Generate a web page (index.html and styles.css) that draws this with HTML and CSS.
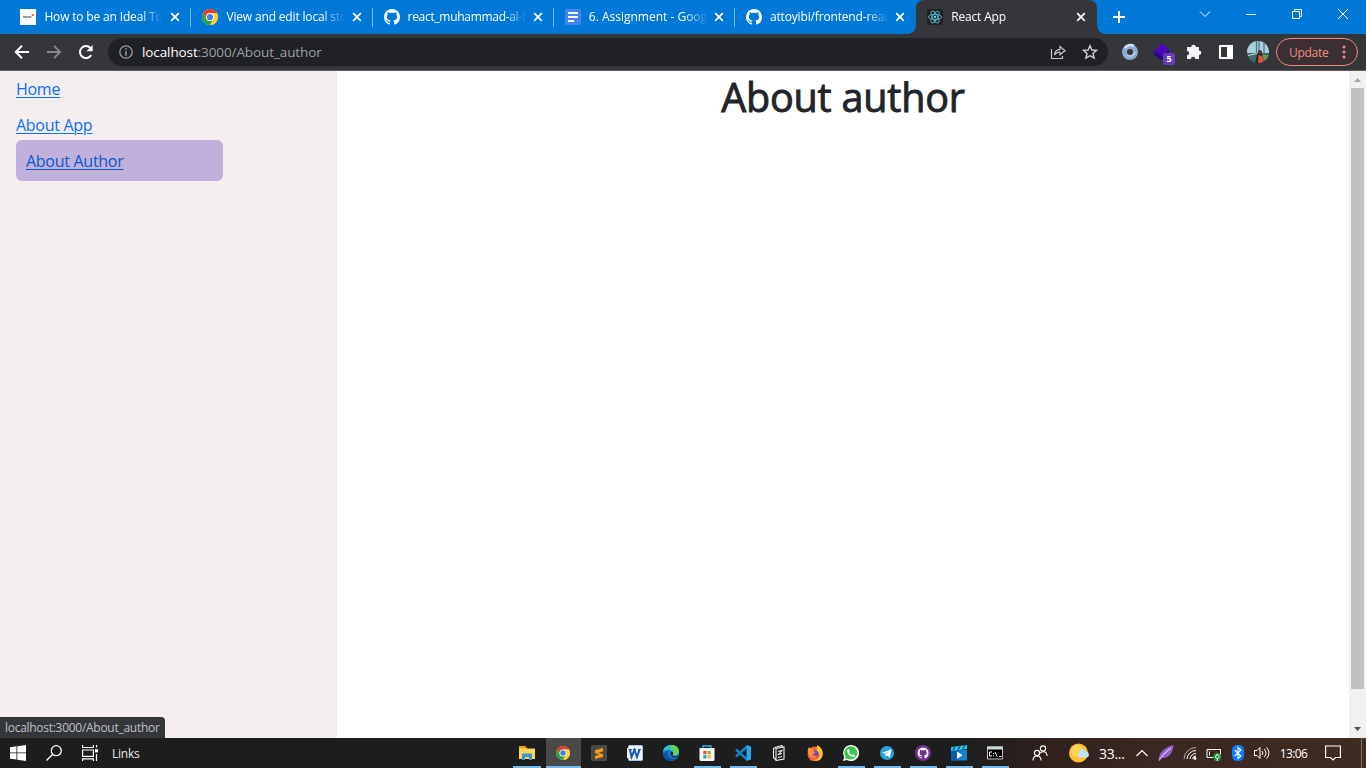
FILE: index.html
```html
<!DOCTYPE html>
<html lang="en">
<head>
<meta charset="utf-8">
<title>React App</title>
<link rel="stylesheet" href="styles.css">
</head>
<body>
<svg class="defs" width="0" height="0">
  <defs>
    <symbol id="close" viewBox="0 0 10 10"><path d="M1.2 1.2l7.6 7.6M8.8 1.2L1.2 8.8" fill="none" stroke="#fff" stroke-width="1.7"/></symbol>
    <symbol id="github" viewBox="0 0 16 16"><path fill="currentColor" d="M8 0C3.58 0 0 3.58 0 8c0 3.54 2.29 6.53 5.47 7.59.4.07.55-.17.55-.38 0-.19-.01-.82-.01-1.49-2.01.37-2.53-.49-2.69-.94-.09-.23-.48-.94-.82-1.13-.28-.15-.68-.52-.01-.53.63-.01 1.08.58 1.23.82.72 1.21 1.87.87 2.33.66.07-.52.28-.87.51-1.07-1.78-.2-3.64-.89-3.64-3.95 0-.87.31-1.59.82-2.15-.08-.2-.36-1.02.08-2.12 0 0 .67-.21 2.2.82.64-.18 1.32-.27 2-.27s1.36.09 2 .27c1.53-1.04 2.2-.82 2.2-.82.44 1.1.16 1.92.08 2.12.51.56.82 1.27.82 2.15 0 3.07-1.87 3.75-3.65 3.95.29.25.54.73.54 1.48 0 1.07-.01 1.93-.01 2.2 0 .21.15.46.55.38A8.01 8.01 0 0 0 16 8c0-4.42-3.58-8-8-8z"/></symbol>
    <symbol id="chrome" viewBox="0 0 16 16">
      <circle cx="8" cy="8" r="8" fill="#fc3"/>
      <path d="M1.07 4A8 8 0 0 1 14.93 4H8a4 4 0 0 0-3.46 6z" fill="#e33b2e"/>
      <path d="M1.07 4A8 8 0 0 0 8 16l3.46-6A4 4 0 0 1 4.54 10z" fill="#2ba24c"/>
      <path d="M14.93 4A8 8 0 0 1 8 16l3.46-6A4 4 0 0 0 8 4z" fill="#fdd03b"/>
      <circle cx="8" cy="8" r="4" fill="#fff"/><circle cx="8" cy="8" r="3.1" fill="#3f7ee8"/>
    </symbol>
  </defs>
</svg>

<header class="tabs">
  <div class="tab first">
    <svg class="favicon" viewBox="0 0 16 16"><path fill="#fff" d="M0 0h16v16H0z"/><path d="M3 8h8.500" stroke="#77788a" stroke-width="1.500"/><path d="M5 10.500h5" stroke="#e4e4e4" stroke-width=".7"/><circle cx="12.800" cy="6" r="1.200" fill="#f26a2a"/></svg>
    <span class="title">How to be an Ideal Top</span><svg class="x"><use href="#close"/></svg>
  </div>
  <div class="tab">
    <svg class="favicon"><use href="#chrome"/></svg>
    <span class="title">View and edit local sto</span><svg class="x"><use href="#close"/></svg>
  </div>
  <div class="tab">
    <svg class="favicon"><use href="#github"/></svg>
    <span class="title tight">react_muhammad-al-f</span><svg class="x"><use href="#close"/></svg>
  </div>
  <div class="tab">
    <svg class="favicon" viewBox="0 0 16 16"><rect width="16" height="16" rx="1.5" fill="#4384f4"/><path d="M3 4h10M3 8h10M3 12h6" stroke="#fff" stroke-width="2"/></svg>
    <span class="title loose">6. Assignment - Googl</span><svg class="x"><use href="#close"/></svg>
  </div>
  <div class="tab last">
    <svg class="favicon"><use href="#github"/></svg>
    <span class="title">attoyibi/frontend-reac</span><svg class="x"><use href="#close"/></svg>
  </div>
  <div class="tab active">
    <svg class="favicon" viewBox="0 0 16 16"><rect width="16" height="16" rx="2" fill="#222"/><g fill="none" stroke="#53b5cb" stroke-width=".9"><ellipse cx="8" cy="8" rx="6.6" ry="2.6"/><ellipse cx="8" cy="8" rx="6.6" ry="2.6" transform="rotate(60 8 8)"/><ellipse cx="8" cy="8" rx="6.6" ry="2.6" transform="rotate(120 8 8)"/></g><circle cx="8" cy="8" r="1.2" fill="#61dafb"/></svg>
    <span class="title">React App</span><svg class="x"><use href="#close"/></svg>
  </div>
  <svg class="plus" viewBox="0 0 12 12"><path d="M6 0v12M0 6h12" stroke="#fff" stroke-width="2"/></svg>
  <div class="window-controls">
    <svg width="12" height="12" viewBox="0 0 12 12"><path d="M1 3.5l5 5 5-5"/></svg>
    <svg width="12" height="12" viewBox="0 0 12 12"><path d="M1 6.5h10"/></svg>
    <svg width="12" height="12" viewBox="0 0 12 12"><path d="M1.5 3.5h7v7h-7zM3.5 3.5v-2h7v7h-2"/></svg>
    <svg width="12" height="12" viewBox="0 0 12 12"><path d="M1 1l10 10M11 1L1 11"/></svg>
  </div>
</header>

<nav class="toolbar">
  <div class="nav-icons">
    <svg viewBox="0 0 16 16"><path d="M15 8H2M8 1.8L1.8 8 8 14.2" fill="none" stroke="#fff" stroke-width="2"/></svg>
    <svg viewBox="0 0 16 16"><path d="M1 8h13M8 1.8L14.2 8 8 14.2" fill="none" stroke="#88898b" stroke-width="1.8"/></svg>
    <svg viewBox="0 0 16 16"><path d="M13.2 11A6 6 0 1 1 12.4 4" fill="none" stroke="#fff" stroke-width="2"/><path d="M14.6 1v6.2H8.4z" fill="#fff"/></svg>
  </div>
  <div class="address">
    <svg class="info" viewBox="0 0 14 14"><circle cx="7" cy="7" r="6.2" fill="none" stroke="#9aa0a6" stroke-width="1.3"/><path d="M7 3.2v1.6M7 6.2v4.6" stroke="#9aa0a6" stroke-width="1.5"/></svg>
    <span class="url"><b>localhost</b>:3000/About_author</span>
    <svg class="share" viewBox="0 0 16 16"><path d="M1.5 5v9.5h11V12M4.5 11c.4-4 2.4-5.6 5.5-5.7V2.5l5 4.2-5 4.1V8C7.6 8 6 8.800 4.500 11z" fill="none" stroke="#c4c7ca" stroke-width="1.2"/></svg>
    <svg class="star" viewBox="0 0 16 16"><path d="M8 1.700l1.900 4.300 4.700.4-3.600 3.100 1.100 4.600L8 11.700l-4.100 2.400L5 9.500 1.400 6.400l4.700-.4z" fill="none" stroke="#d0d3d6" stroke-width="1.4"/></svg>
  </div>
  <div class="extensions">
    <svg viewBox="0 0 18 18"><circle cx="9" cy="9" r="5.500" fill="none" stroke="#90acd0" stroke-width="5"/><path d="M4 5a6.500 6.500 0 0 1 9-2" fill="none" stroke="#d5e3f2" stroke-width="2.500"/><path d="M6 12a5 5 0 0 0 8-3" fill="none" stroke="#bed1e8" stroke-width="1.500"/></svg>
    <span class="purple"><svg viewBox="0 0 18 18"><path d="M1 8l5 2 10-3v4l-8 6-7-5z" fill="#2b0680"/><path d="M9 0l8 7-8 6-8-5z" fill="#4a09b8"/></svg><i>5</i></span>
    <svg viewBox="0 0 18 18"><path d="M2 4h4.200a2.300 2.300 0 1 1 4.600 0H14v3.500a2.300 2.300 0 1 1 0 4.600V16h-3.700a2.200 2.200 0 0 0-4.400 0H2v-3.700a2.200 2.200 0 0 0 0-4.400z" fill="#f1f3f4"/></svg>
    <svg viewBox="0 0 18 18"><path d="M2 2h14v14H2zM4 4v10h6V4z" fill="#fff" fill-rule="evenodd"/></svg>
    <svg class="avatar" viewBox="0 0 22 22"><clipPath id="round"><circle cx="11" cy="11" r="11"/></clipPath><g clip-path="url(#round)"><path fill="#a9d0e0" d="M0 0h22v12H0z"/><path fill="#3f6866" d="M0 12h22v10H0z"/><path fill="#79934c" d="M14 14h8v5h-8z"/><path d="M9.500 0v13M12 0v11M17 0v13" stroke="#53747e" stroke-width="1.300"/><path d="M1 14.500l9-2" stroke="#bed4d3" stroke-width="1.200"/><path fill="#1c2730" d="M10 14l2-5 3 1v3l2 9H8z"/><path fill="#e8552a" d="M11.500 14l3.500 1 2 7h-6z"/><circle cx="13" cy="11.500" r="1.500" fill="#573b35"/></g></svg>
  </div>
  <div class="update"><span>Update</span><svg viewBox="0 0 4 14"><circle cx="2" cy="2" r="1.500"/><circle cx="2" cy="7" r="1.500"/><circle cx="2" cy="12" r="1.500"/></svg></div>
</nav>

<main class="page">
  <aside class="sidebar">
    <a>Home</a>
    <a>About App</a>
    <a class="selected"><span>About Author</span></a>
    <div class="status">localhost:3000/About_author</div>
  </aside>
  <section class="content"><h1>About author</h1></section>
  <div class="scrollbar">
    <svg viewBox="0 0 17 17"><path d="M5 11l3.500-4 3.500 4z" fill="#a3a3a3"/></svg>
    <div class="thumb"></div>
    <svg viewBox="0 0 17 17"><path d="M5 6l3.500 4L12 6z" fill="#505050"/></svg>
  </div>
</main>

<footer class="taskbar">
  <div class="start">
    <svg viewBox="0 0 16 16"><path fill="#fff" d="M0 2.200l6.500-.9v6.200H0zM7.300 1.200L16 0v7.500H7.300zM0 8.300h6.500v6.300L0 13.700zM7.300 8.300H16V16l-8.700-1.200z"/></svg>
    <svg viewBox="0 0 16 16"><g fill="none" stroke="#fff" stroke-width="1.300"><circle cx="10.300" cy="5.700" r="5"/><path d="M6.700 9.300L.5 15.500"/></g></svg>
    <svg viewBox="0 0 16 16"><g fill="none" stroke="#fff" stroke-width="1.200"><path d="M.6 0v2.500h10.800V0M.6 5h10.800v6.300H.6zM.6 16v-2.200h10.800V16M14.500 0v2.500M14.500 9v7"/></g><path fill="#fff" d="M13 4.200h3v3.200h-3z"/></svg>
    <span>Links</span>
  </div>
  <div class="apps">
    <div class="app running"><svg viewBox="0 0 16 16"><path fill="#e6a700" d="M0 1h6l2 2v5H0z"/><path fill="#ffd45a" d="M0 3.500h16V14H0z"/><path fill="#3e91d5" d="M3 15V8.500h10V15h-3v-3H6v3z"/></svg></div>
    <div class="app focused"><svg class="small"><use href="#chrome"/></svg></div>
    <div class="app"><svg viewBox="0 0 16 16"><rect width="16" height="16" rx="1" fill="#494949"/><path d="M12 3v3.200L7.500 7.700 12 9.300v2.800L4 14v-3l4.500-1.400L4 8V5.200z" fill="#ff9b0b"/></svg></div>
    <div class="app"><svg viewBox="0 0 16 16"><rect x="1.500" y=".5" width="14" height="15" rx="1" fill="#eef4ff" stroke="#a8c5ed"/><path d="M0 3h13v10H0z" fill="#e8f2ff"/><path d="M3 4.500l1.500 7.500L7.500 5l2.500 7L12.500 4.500" fill="none" stroke="#1b57ad" stroke-width="2"/><path d="M1.500 4.500h3.500M6 4.500h3M11 4.500h3" stroke="#1b57ad" stroke-width="1.200"/></svg></div>
    <div class="app"><svg viewBox="0 0 16 16"><circle cx="8" cy="8" r="8" fill="#137cc8"/><path d="M0 7c.5-9 14-9 16-.5 0 4-4 5-6.500 3.500C12 5 3 3 0 7z" fill="#34c4c7"/><path d="M9 .1c5 0 8 4 6.700 8C14 11 9 10.500 9.500 9 12 6 10 3 7 2z" fill="#6bd24d"/><path d="M5 6c-2 6 4 9 9 7-5 6-14 2-13-4 .5-2 2-3 4-3z" fill="#0b54a3"/><path d="M8 7c2-1 3 1 1.500 3 1.500 1.500 4 1.500 6 .3-2 4-8 2-8-2z" fill="#1d2832"/></svg></div>
    <div class="app running"><svg viewBox="0 0 16 16"><path d="M4 3V1h8v2" fill="none" stroke="#35b4e8" stroke-width="1.300"/><path fill="#f6f6f6" d="M.5 3h15v11.500a1.500 1.500 0 0 1-1.500 1.500H2a1.500 1.500 0 0 1-1.500-1.500z"/><path fill="#e94d28" d="M4.300 6h3.200v3.200H4.300z"/><path fill="#7ebb42" d="M8.500 6h3.200v3.200H8.500z"/><path fill="#189ed9" d="M4.300 10.200h3.200v3.200H4.300z"/><path fill="#f8b725" d="M8.500 10.200h3.200v3.200H8.500z"/></svg></div>
    <div class="app running"><svg viewBox="0 0 16 16"><path d="M12 1.500L1 11.500M1 4.500l11 10" stroke="#1581cb" stroke-width="2.400"/><path d="M11.500 0L16 1.500v13L11.500 16z" fill="#2aa7f2"/></svg></div>
    <div class="app"><svg viewBox="0 0 16 16"><g fill="none" stroke="#eee" stroke-width="1.100"><path d="M4 2.500l7-2V3M4 2.500l-1.500 1v9L5 15M5 3.500l8-1.500v12l-8 1.500zM7 6.500l4-1-3.500 4 3.500-1M7 12.500l4-1"/></g></svg></div>
    <div class="app"><svg viewBox="0 0 16 16"><circle cx="8" cy="9" r="7.500" fill="#fb613b"/><path d="M10 0c6 3 7 9 4.500 13-2 3-6 3-8 2 8-1 7-6 3.500-9z" fill="#ffc52d"/><path d="M.6 6c0-2 1-3 1.700-4L4 4l3 .3L5 7l2 5c-4 0-5-2-6.400-6z" fill="#ff9b30"/><circle cx="8.200" cy="8.700" r="3.200" fill="#7542c5"/><path d="M3 6c4-1 6 1 5 2L6 9c0 2 2 2.500 4 1.500-2 4-8 1-7-4.500z" fill="#ff8c35"/></svg></div>
    <div class="app running"><svg viewBox="0 0 16 16"><path fill="#fff" d="M8 0a8 8 0 1 1-4 14.900L0 16l1.200-4A8 8 0 0 1 8 0z"/><path fill="#3dc454" d="M8 1.300a6.600 6.600 0 1 1-3.700 12.200L1.900 14l.7-2.300A6.600 6.600 0 0 1 8 1.300z"/><path d="M5.500 3.800L4.200 5c0 4 3 7 7 7l1-1.500-2.200-1.300-1 1C7.600 9.700 6.700 8.700 6 7.200l.8-1z" fill="#fff"/></svg></div>
    <div class="app running"><svg class="small" viewBox="0 0 16 16"><circle cx="8" cy="8" r="8" fill="#27a2da"/><path fill="#fff" d="M2.500 7.800L13 3.700 11.300 13 8 10.700l-1.700 1.500-.3-2.800L10.500 6 5 8.900z"/></svg></div>
    <div class="app running"><svg viewBox="0 0 16 16"><circle cx="8" cy="8" r="8" fill="#713290"/><g transform="translate(2.500 2.500) scale(.7)" color="#fff"><use href="#github" width="16" height="16"/></g></svg></div>
    <div class="app running"><svg viewBox="0 0 16 16"><path fill="#1380d0" d="M0 5h16v10.500H0z"/><path fill="#075aad" d="M0 5h7v10.500H0z"/><path fill="#35c4e8" d="M0 2l16-2v4L0 6z"/><path d="M4 1.500L2 5.500m7-4.700L7 5m7-5l-2 4" stroke="#08669f" stroke-width="1.600"/><path fill="#fff" d="M6 6.500l5.500 3.700L6 14z"/></svg></div>
    <div class="app running"><svg viewBox="0 0 16 16"><path fill="#000" stroke="#bbb" d="M.5 2h15v12H.5z"/><path fill="#ccd5da" d="M0 1.500h16v3H0z"/><path d="M5 7H2.500v4H5M6.500 8v1m0 1.500v1M8 7l2 4.500M12 11.500h2.500" stroke="#fff" fill="none"/></svg></div>
  </div>
  <div class="tray">
    <div class="slot people"><svg viewBox="0 0 16 16"><g fill="none" stroke="#fff" stroke-width="1.100"><circle cx="5" cy="8" r="2.600"/><circle cx="11" cy="3.500" r="2.600"/><path d="M1 15.500c0-6 8-6 8 0M7 10c1-4 8-5 8 1"/></g></svg></div>
    <div class="slot weather"><svg viewBox="0 0 20 20"><circle cx="9.500" cy="10" r="9.500" fill="#ffbd32"/><circle cx="8" cy="8" r="6" fill="#ffd253"/><path d="M10 14.500a3 3 0 0 1 0-5c1-5 6-4 6.500-1 4 0 4.500 5 1.500 6z" fill="#bfe4f9"/></svg><span>33...</span></div>
    <div class="slot"><svg class="chev" viewBox="0 0 12 8"><path d="M.5 7L6 1.500 11.500 7" fill="none" stroke="#fff" stroke-width="1.200"/></svg></div>
    <div class="slot"><svg viewBox="0 0 16 16"><path fill="#935fc9" d="M.5 15.500C1 6 8 2 15.500 0c0 7-5 14-12 13z"/><path d="M1 15.500Q7 7 13 3" fill="none" stroke="#dbc3ef" stroke-width="1.100"/></svg></div>
    <div class="slot"><svg class="wifi" viewBox="0 0 14 14"><g fill="none" stroke="#fff" stroke-width="1"><path d="M1 13A12 12 0 0 1 13 1.500" opacity=".6"/><path d="M4 13a9 9 0 0 1 9-8.500M7 13a6 6 0 0 1 6-5.500M9.500 13a3.500 3.500 0 0 1 3.500-3"/></g><circle cx="12" cy="12.500" r="1.400" fill="#fff"/></svg></div>
    <div class="slot"><svg viewBox="0 0 16 16"><path d="M1 4.500h13.500v8H1zM3.500 6.500v4" fill="none" stroke="#fff"/><circle cx="11.300" cy="12" r="4.200" fill="#16922e"/><path d="M11.300 9l2 3-2 2-2-2zM11.300 13v3" fill="none" stroke="#fff" stroke-width="1"/></svg></div>
    <div class="slot"><svg class="bluetooth" viewBox="0 0 12 16"><rect width="12" height="16" rx="5" fill="#087bff"/><path d="M2.700 5l6.200 6L6 13.500v-11L8.900 5l-6.200 6" fill="none" stroke="#fff" stroke-width="1.100"/></svg></div>
    <div class="slot"><svg viewBox="0 0 16 16"><g fill="none" stroke="#fff"><path d="M.5 5.500H3L6 2.500v11l-3-3H.5zM8 6q1.800 2 0 4M10.200 4q3.600 4 0 8M12.500 2.300q5 5.700 0 11.400"/></g></svg></div>
    <div class="slot time">13:06</div>
    <div class="slot note"><svg viewBox="0 0 16 16"><path d="M.6 1h14.800v11.500h-4.900L8 15l-2.500-2.500H.6z" fill="none" stroke="#fff" stroke-width="1.200"/></svg></div>
    <div class="desktop"></div>
  </div>
</footer>
</body>
</html>
```
FILE: styles.css
```css
* { box-sizing: border-box; }
body { margin: 0; width: 1366px; height: 768px; overflow: hidden; display: flex; flex-direction: column; font-family: "Open Sans", "Noto Sans", sans-serif; font-size: 12px; background: #fff; }
svg { display: block; flex: none; }
.defs { position: absolute; }
.tabs { height: 34px; flex: none; background: #0078d7; display: flex; padding-left: 9px; color: #fff; }
.tab { width: 181.2px; height: 34px; flex: none; display: flex; align-items: center; padding-left: 11.4px; position: relative; }
.tab.first { width: 182px; }
.tab:not(.active):not(.last)::after { content: ""; position: absolute; right: -.4px; top: 8px; width: 1px; height: 19px; background: #78b6e9; }
.favicon { width: 16px; height: 16px; }
.title { margin-left: 8px; width: 119px; overflow: hidden; white-space: nowrap; line-height: 18px; letter-spacing: -.16px; -webkit-mask-image: linear-gradient(90deg, #000 96px, transparent 119px); mask-image: linear-gradient(90deg, #000 96px, transparent 119px); }
.title.tight { letter-spacing: -.3px; }
.title.loose { letter-spacing: 0; }
.x { width: 10px; height: 10px; margin-left: 6.2px; }
.active { background: #35363a; border-radius: 8px 8px 0 0; }
.active::before, .active::after { content: ""; position: absolute; bottom: 0; width: 8px; height: 8px; }
.active::before { left: -8px; background: radial-gradient(circle at 0 0, transparent 7.5px, #35363a 8px); }
.active::after { right: -8px; background: radial-gradient(circle at 100% 0, transparent 7.5px, #35363a 8px); }
.plus { width: 12px; height: 12px; margin: 11px 0 0 16px; }
.window-controls { display: flex; gap: 34px; margin: 8px 17px 0 auto; }
.window-controls path { fill: none; stroke: #fff; stroke-width: 1; }
.toolbar { height: 37px; flex: none; background: #35363a; border-bottom: 1px solid #5f5b61; display: flex; align-items: center; }
.nav-icons { display: flex; gap: 16px; padding-left: 14px; width: 108px; }
.nav-icons svg { width: 16px; height: 16px; }
.address { width: 1000px; height: 28px; border-radius: 14px; background: #202124; display: flex; align-items: center; padding-left: 11px; }
.info { width: 14px; height: 14px; }
.url { margin-left: 9px; color: #9aa0a6; font-size: 13.5px; letter-spacing: -.1px; line-height: 20px; white-space: nowrap; }
.url b { color: #fff; font-weight: 400; }
.share { width: 16px; height: 16px; margin-left: auto; }
.star { width: 16px; height: 16px; margin: 0 10px 0 16px; }
.extensions { display: flex; align-items: center; gap: 14px; margin-left: 13px; }
.extensions svg { width: 18px; height: 18px; }
.purple { position: relative; }
.purple i { position: absolute; left: 10px; top: 10px; width: 12px; height: 12px; border-radius: 2px; background: #673ab7; color: #fff; font: 700 9px/12px "Open Sans", sans-serif; text-align: center; }
.extensions .avatar { width: 22px; height: 22px; margin-left: -2px; }
.update { width: 82px; height: 28px; border: 1px solid #f28b82; border-radius: 14px; margin-left: 7px; color: #f28b82; background: #3c2f33; display: flex; align-items: center; padding-left: 12px; letter-spacing: -.3px; }
.update svg { width: 4px; height: 14px; margin-left: auto; margin-right: 11px; fill: #f28b82; }
.page { height: 667px; flex: none; display: flex; }
.sidebar { width: 337px; background: #f4eeee; position: relative; padding: 6px 16px; color: #0d6efd; font-size: 16px; line-height: 24px; }
.sidebar a { display: block; height: 24px; margin-bottom: 12px; text-decoration: underline; text-underline-offset: 2px; text-decoration-thickness: 1px; letter-spacing: -.28px; font-weight: 400; }
.sidebar .selected { width: 207px; height: 41px; margin-top: -9px; padding: 9px 10px; border-radius: 6px; background: #c1b0dc; color: #0a58ca; }
.status { position: absolute; left: 0; bottom: 0; width: 165px; height: 21px; background: #35363a; color: #bdc1c6; border-top-right-radius: 4px; font-size: 12px; line-height: 21px; letter-spacing: -.28px; padding-left: 5px; white-space: nowrap; }
.content { flex: 1; text-align: center; }
h1 { margin: 2px 0 0; font-size: 39.5px; line-height: 48px; letter-spacing: -.2px; font-weight: 400; color: #212529; -webkit-text-stroke: .9px #212529; }
.scrollbar { width: 17px; background: #f1f1f1; display: flex; flex-direction: column; }
.scrollbar svg { width: 17px; height: 17px; }
.thumb { width: 13px; height: 601px; margin: 0 2px auto; background: #c1c1c1; }
.taskbar { height: 30px; background: linear-gradient(90deg, #1d1d1d 0, #1d1d1d 960px, #30211d 1050px, #3b2721 1150px, #3f2b20 100%); display: flex; color: #fff; }
.start { width: 509px; display: flex; align-items: center; padding-left: 10px; }
.start svg { width: 16px; height: 16px; margin-right: 20px; }
.start svg:nth-child(3) { margin-right: 14px; }
.start span { color: #e8e8e8; letter-spacing: -.25px; }
.apps { display: flex; }
.app { width: 36px; height: 30px; display: flex; align-items: center; justify-content: center; position: relative; }
.app svg { width: 16px; height: 16px; }
.app .small { width: 14px; height: 14px; }
.running::after, .focused::after { content: ""; position: absolute; left: 5px; bottom: 0; width: 27px; height: 2px; background: #76b9ed; }
.app.running:first-child::after { left: 4px; width: 28px; }
.focused { background: linear-gradient(90deg, transparent 1px, #494949 1px); }
.focused::after { left: 1px; width: 35px; }
.tray { flex: 1; display: flex; align-items: center; padding-left: 14px; }
.slot { width: 24px; height: 30px; flex: none; display: flex; align-items: center; justify-content: center; }
.slot svg { width: 16px; height: 16px; }
.people { width: 26px; margin-right: 16px; }
.weather { width: 61px; justify-content: flex-start; }
.weather svg { width: 20px; height: 20px; }
.weather span { margin-left: 10px; font-size: 14px; letter-spacing: -.3px; }
.slot .chev { width: 12px; height: 8px; }
.slot .wifi { width: 14px; height: 14px; }
.slot .bluetooth { width: 12px; height: 16px; }
.time { width: 39px; letter-spacing: -.6px; }
.note { width: 40px; }
.desktop { width: 1px; height: 30px; background: #80736c; margin-left: auto; margin-right: 4px; }
```
